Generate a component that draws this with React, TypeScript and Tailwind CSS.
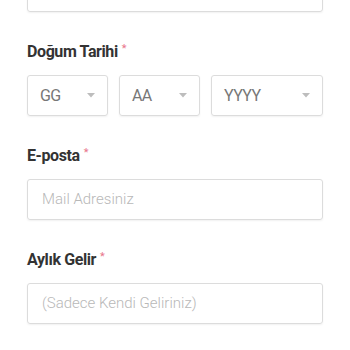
import React from 'react';

function Label({ text }: { text: string }) {
  return (
    <div className="h-5 mb-[13px] flex items-start leading-5 text-[16px] font-bold text-[#333333] tracking-[-0.4px]">
      <span>{text}</span>
      <span className="ml-[4px] text-[11px] leading-[14px] text-[#e8768a] font-normal">*</span>
    </div>
  );
}

function Caret() {
  return (
    <svg width="8" height="5" viewBox="0 0 8 5" className="shrink-0">
      <path d="M0 0 L8 0 L4 4.5 Z" fill="#bdbdbd" />
    </svg>
  );
}

function Select({ text, className }: { text: string; className: string }) {
  return (
    <div
      className={`h-[41px] border border-[#dcdcdc] rounded-[3px] shadow-[0_1px_2px_rgba(0,0,0,0.06)] flex items-center justify-between pl-[12px] pr-[12px] ${className}`}
    >
      <span className="text-[16px] text-[#777777] tracking-[-0.6px]">{text}</span>
      <Caret />
    </div>
  );
}

function Input({ placeholder }: { placeholder?: string }) {
  return (
    <div className="h-[41px] w-[296px] border border-[#dcdcdc] rounded-[3px] shadow-[0_1px_2px_rgba(0,0,0,0.06)] flex items-center pl-[14px]">
      <span className="text-[15px] font-light text-[#b8b8b8]">{placeholder}</span>
    </div>
  );
}

export default function App() {
  return (
    <div className="w-[350px] h-[350px] bg-white overflow-hidden" style={{ fontFamily: 'Roboto, "Noto Sans", sans-serif' }}>
      <div className="pl-[27px] -mt-[29px] flex flex-col gap-[30px]">
        <Input />

        <div>
          <Label text="Doğum Tarihi" />
          <div className="flex gap-[11px]">
            <Select text="GG" className="w-[81px]" />
            <Select text="AA" className="w-[81px]" />
            <Select text="YYYY" className="w-[112px]" />
          </div>
        </div>

        <div>
          <Label text="E-posta" />
          <Input placeholder="Mail Adresiniz" />
        </div>

        <div>
          <Label text="Aylık Gelir" />
          <Input placeholder="(Sadece Kendi Geliriniz)" />
        </div>
      </div>
    </div>
  );
}
